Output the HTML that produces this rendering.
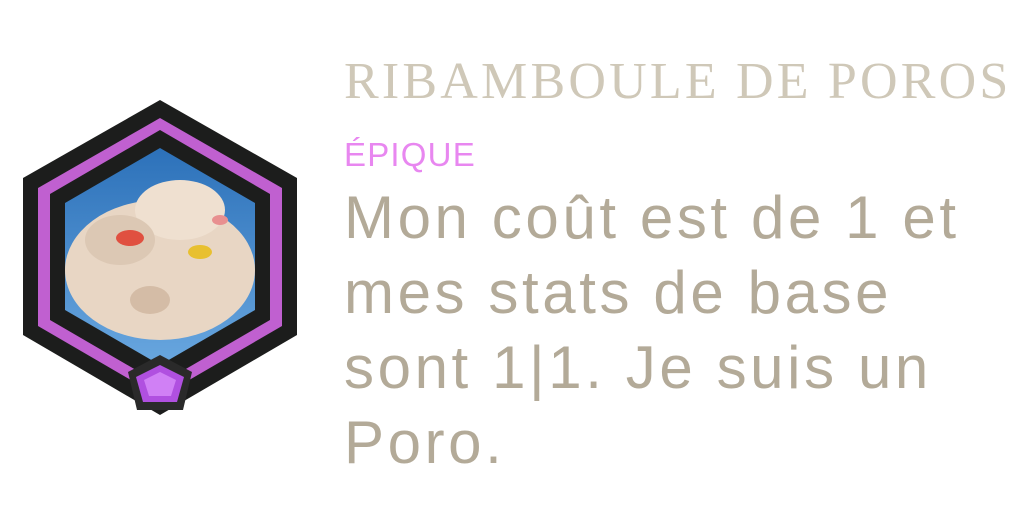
<!DOCTYPE html>
<html><head><meta charset="utf-8"><style>
html,body{margin:0;padding:0;background:#fff;width:1024px;height:512px;overflow:hidden;position:relative}
.t{position:absolute;left:344px;top:52px;font-family:"Liberation Serif",serif;font-size:52px;color:#cfc8b8;letter-spacing:3.2px;white-space:nowrap;line-height:60px}
.r{position:absolute;left:344px;top:135px;font-family:"Liberation Sans",sans-serif;font-size:33px;color:#e887f0;line-height:40px;letter-spacing:1.2px}
.b{position:absolute;left:344px;top:180px;width:680px;font-family:"Liberation Sans",sans-serif;font-size:60px;color:#b3aa98;line-height:75px;letter-spacing:3.6px;white-space:nowrap}
</style></head><body>
<svg width="320" height="430" style="position:absolute;left:0;top:0">
<defs>
<linearGradient id="sky" x1="0" y1="0" x2="0" y2="1"><stop offset="0" stop-color="#2a6fb8"/><stop offset="1" stop-color="#6aa8e0"/></linearGradient>
<clipPath id="c"><polygon points="160,148 255,203 255,310 160,365 65,310 65,203"/></clipPath>
</defs>
<polygon points="160,100 297,178 297,335 160,415 23,335 23,178" fill="#1c1d1c"/>
<polygon points="160,118 282,188 282,326 160,397 38,326 38,188" fill="#c060d0"/>
<polygon points="160,130 270,194 270,320 160,384 50,320 50,194" fill="#1c1d1c"/>
<g clip-path="url(#c)">
<rect x="60" y="140" width="200" height="230" fill="url(#sky)"/>
<ellipse cx="160" cy="270" rx="95" ry="70" fill="#e8d6c4"/>
<ellipse cx="180" cy="210" rx="45" ry="30" fill="#efe0d0"/>
<ellipse cx="120" cy="240" rx="35" ry="25" fill="#dcc8b4"/>
<ellipse cx="130" cy="238" rx="14" ry="8" fill="#e05040"/>
<ellipse cx="200" cy="252" rx="12" ry="7" fill="#e8c030"/>
<ellipse cx="150" cy="300" rx="20" ry="14" fill="#d4bca6"/>
<ellipse cx="220" cy="220" rx="8" ry="5" fill="#e89090"/>
</g>
<polygon points="160,355 192,372 183,410 137,410 128,372" fill="#2a2a2a"/>
<polygon points="160,365 184,377 177,402 143,402 136,377" fill="#b050e0"/>
<polygon points="160,372 176,380 171,396 149,396 144,380" fill="#d080f5"/>
</svg>
<div class="t">RIBAMBOULE DE POROS</div>
<div class="r">ÉPIQUE</div>
<div class="b">Mon coût est de 1 et<br>mes stats de base<br>sont 1|1. Je suis un<br>Poro.</div>
</body></html>
